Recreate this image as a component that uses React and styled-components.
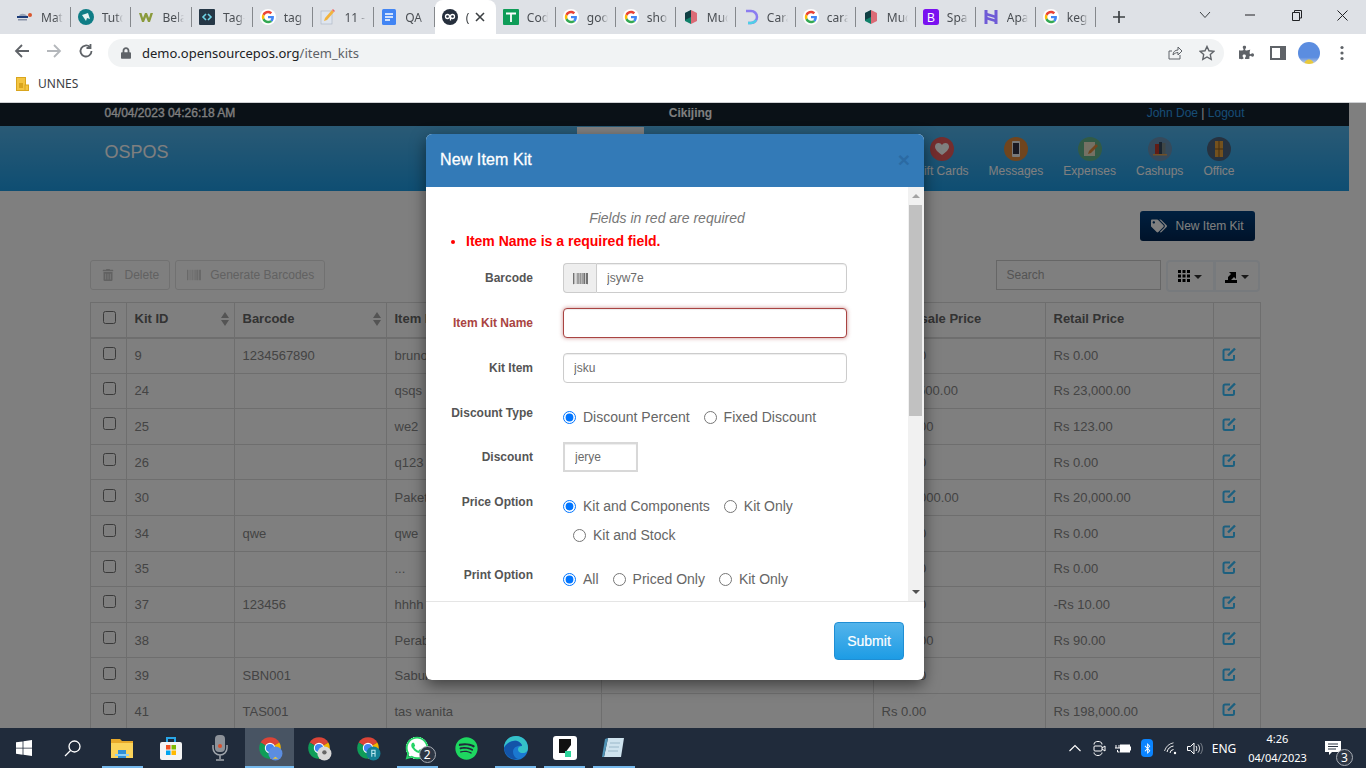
import React from 'react';
import styled, { createGlobalStyle } from 'styled-components';
import { FaTrashAlt, FaBarcode, FaTags, FaWhatsapp, FaSpotify, FaBluetoothB, FaPuzzlePiece, FaLock } from 'react-icons/fa';

const GlobalStyle = createGlobalStyle`
  html, body { margin: 0; padding: 0; overflow: hidden; }
  * { box-sizing: border-box; }
  body { font-family: "Liberation Sans", Arial, sans-serif; }
`;

const Screen = styled.div`
  width: 1366px;
  height: 768px;
  display: flex;
  flex-direction: column;
  overflow: hidden;
  background: #fff;
`;

/* ---------- browser chrome ---------- */
const TabStrip = styled.div`
  height: 34px;
  flex: none;
  background: #dee1e6;
  display: flex;
  padding-left: 10px;
`;

const Tab = styled.div`
  width: ${(p) => p.$w}px;
  height: 34px;
  flex: none;
  display: flex;
  align-items: center;
  font-family: "Noto Sans", sans-serif;
  font-size: 12px;
  color: ${(p) => (p.$active ? '#3c4043' : '#4a4e53')};
  background: ${(p) => (p.$active ? '#fff' : 'transparent')};
  border-radius: ${(p) => (p.$active ? '8px 8px 0 0' : '0')};
`;

const TabInner = styled.div`
  width: 100%;
  height: 20px;
  padding-left: 7px;
  display: flex;
  align-items: center;
  gap: 8px;
  border-right: 1px solid ${(p) => (p.$plain ? 'transparent' : '#85888c')};
`;

const TabText = styled.span`
  flex: 1;
  min-width: 0;
  overflow: hidden;
  white-space: nowrap;
  margin-right: ${(p) => (p.$active ? '0' : '7px')};
  -webkit-mask-image: linear-gradient(to right, #000 65%, transparent 100%);
  mask-image: linear-gradient(to right, #000 65%, transparent 100%);
`;

const TabClose = styled.svg`
  width: 10px;
  height: 10px;
  flex: none;
  margin: 0 10px 0 -6px;
`;

const NewTab = styled.svg`
  width: 14px;
  height: 14px;
  margin: 10px 0 0 16px;
  flex: none;
`;

const WindowControls = styled.div`
  margin-left: auto;
  display: flex;
  height: 30px;
`;

const WindowButton = styled.div`
  width: 46.5px;
  height: 30px;
  display: flex;
  align-items: center;
  justify-content: center;
  padding-left: ${(p) => (p.$nudge ? `${p.$nudge}px` : '0')};
`;

const Toolbar = styled.div`
  height: 33px;
  flex: none;
  background: #fff;
  display: flex;
  align-items: center;
  padding-left: 14px;
`;

const NavArrow = styled.svg`
  width: 16px;
  height: 16px;
  flex: none;
  margin-right: 16px;
`;

const Omnibox = styled.div`
  width: 1116px;
  height: 28px;
  margin: 4px 0 0 -2px;
  border-radius: 14px;
  background: #f1f3f4;
  display: flex;
  align-items: center;
  padding: 0 9px 0 13px;
  font-family: "Noto Sans", sans-serif;
  font-size: 13px;
  color: #202124;
`;

const UrlPath = styled.span`
  color: #5f6368;
`;

const LockIcon = styled(FaLock)`
  width: 10px;
  height: 12px;
  color: #5f6368;
  margin-right: 11px;
`;

const OmniActions = styled.div`
  margin-left: auto;
  display: flex;
  align-items: center;
  gap: 16px;
`;

const ToolActions = styled.div`
  display: flex;
  align-items: center;
  margin: 4px 0 0 15px;
  gap: 16px;
`;

const Avatar = styled.div`
  width: 22px;
  height: 22px;
  margin: 0 4px 0 -4px;
  border-radius: 50%;
  background: radial-gradient(circle at 50% 100%, #e8c93c 0 4px, transparent 5px), linear-gradient(#5b8de0 70%, #cfd6e0 100%);
`;

const BookmarkBar = styled.div`
  height: 36px;
  flex: none;
  display: flex;
  align-items: center;
  gap: 9px;
  padding: 0 0 2px 16px;
  background: #fff;
  border-bottom: 1px solid #cfd1d4;
  font-family: "Noto Sans", sans-serif;
  font-size: 12px;
  color: #3c4043;
`;

/* ---------- page behind the dialog ---------- */
const Page = styled.div`
  flex: 1;
  min-height: 0;
  position: relative;
  overflow: hidden;
  background: #fff;
`;

const PageInner = styled.div`
  width: 1349px;
`;

const Container = styled.div`
  width: 1170px;
  margin: 0 auto;
  display: flex;
`;

const TopBar = styled.div`
  height: 23px;
  background: #14222f;
  font-size: 12px;
  line-height: 20px;
  color: #fff;
`;

const DateCell = styled.div`
  width: 400px;
  padding-left: 15px;
  -webkit-text-stroke: 0.3px #fff;
`;

const BranchCell = styled.div`
  width: 402px;
  text-align: center;
  font-weight: bold;
`;

const UserCell = styled.div`
  flex: 1;
  padding-right: 15px;
  text-align: right;
`;

const UserLink = styled.span`
  color: #2e9be8;
`;

const NavBar = styled.div`
  height: 65px;
  background: linear-gradient(#54b4eb, #1d9ce5);
`;

const Brand = styled.div`
  font-size: 18px;
  line-height: 20px;
  color: #fff;
  padding: 16px 0 0 15px;
`;

const NavList = styled.div`
  margin-left: auto;
  padding-right: 15px;
  display: flex;
`;

const NavItem = styled.div`
  margin-top: 1px;
  margin-right: ${(p) => (p.$after ? `${p.$after}px` : '0')};
  min-width: ${(p) => (p.$active ? '67px' : '0')};
  padding: 10px 10px 0;
  display: flex;
  flex-direction: column;
  align-items: center;
  gap: 3px;
  font-size: 12px;
  line-height: 14px;
  white-space: nowrap;
  color: ${(p) => (p.$active ? '#333' : '#fff')};
  background: ${(p) => (p.$active ? '#fff' : 'transparent')};
`;

const NavIcon = styled.svg`
  width: 24px;
  height: 24px;
`;

const Content = styled.div`
  width: 1170px;
  margin: 0 auto;
  padding-top: 20px;
  font-size: 13px;
  color: #888;
`;

const TitleRow = styled.div`
  display: flex;
  justify-content: flex-end;
  padding-right: 5px;
`;

const PrimaryButton = styled.div`
  width: 115px;
  height: 30px;
  border-radius: 3px;
  background: linear-gradient(#00407f, #002654);
  color: #fff;
  font-size: 12px;
  display: flex;
  align-items: center;
  gap: 9px;
  padding-left: 11px;
`;

const ButtonRow = styled.div`
  display: flex;
  align-items: flex-start;
  margin-top: 19px;
  height: 42px;
`;

const GhostButton = styled.div`
  height: 30px;
  display: flex;
  align-items: center;
  gap: ${(p) => p.$gap}px;
  padding: 0 10px 0 11px;
  margin-right: 5px;
  border: 1px solid #e3e3e3;
  border-radius: 3px;
  font-size: 12px;
  color: #c4c4c4;
`;

const SearchBox = styled.div`
  width: 165px;
  height: 30px;
  margin-left: auto;
  border: 1px solid #ccc;
  font-size: 12px;
  line-height: 28px;
  padding-left: 10px;
  color: #a9a9a9;
`;

const ColumnGroup = styled.div`
  display: flex;
  margin-left: 5px;
  border: 2px solid #eef4fa;
  border-radius: 4px;
  height: 32px;
`;

const ColumnButton = styled.div`
  width: 45px;
  display: flex;
  align-items: center;
  justify-content: center;
  gap: 4px;
  border-left: ${(p) => (p.$split ? '3px solid #eef4fa' : 'none')};
`;

const Caret = styled.span`
  width: 0;
  height: 0;
  border-left: 4px solid transparent;
  border-right: 4px solid transparent;
  border-top: 4px solid #333;
  margin-top: 2px;
`;

const DataTable = styled.table`
  width: 1170px;
  border-collapse: collapse;
  table-layout: fixed;
`;

const HeadCell = styled.th`
  height: 35px;
  padding: 0 8px 2px;
  border: 1px solid #ddd;
  border-bottom: 2px solid #ddd;
  text-align: left;
  font-size: 13px;
  color: #666;
`;

const HeadInner = styled.div`
  display: flex;
  align-items: center;
  justify-content: space-between;
  margin-right: -3px;
`;

const BodyRow = styled.tr`
  height: 35.6px;
`;

const BodyCell = styled.td`
  padding: 0 8px;
  border: 1px solid #ddd;
  overflow: hidden;
  white-space: nowrap;
`;

const CheckCell = styled.td`
  padding: 0 0 5px 12px;
  border: 1px solid #ddd;
`;

const CheckHead = styled(HeadCell)`
  padding: 0 0 5px 12px;
`;

const RowCheck = styled.input`
  display: block;
  width: 13px;
  height: 13px;
  margin: 0;
`;

const EditCell = styled(BodyCell)`
  padding: 0 0 4px 8px;
  line-height: 0;
`;

const EditIcon = styled.svg`
  width: 15px;
  height: 14px;
`;

/* ---------- dialog ---------- */
const Backdrop = styled.div`
  position: absolute;
  inset: 0;
  background: rgba(0, 0, 0, 0.5);
`;

const Modal = styled.div`
  position: absolute;
  top: 31px;
  left: 426px;
  width: 498px;
  height: 546px;
  background: #fff;
  border-radius: 6px;
  box-shadow: 0 5px 15px rgba(0, 0, 0, 0.5);
  overflow: hidden;
  display: flex;
  flex-direction: column;
`;

const ModalHeader = styled.div`
  height: 53px;
  flex: none;
  background: #337ab7;
  color: #fff;
  display: flex;
  align-items: center;
  justify-content: space-between;
  padding: 0 14px 2px;
  font-size: 16px;
  letter-spacing: 0.1px;
  -webkit-text-stroke: 0.3px #fff;
`;

const CloseMark = styled.span`
  font-size: 21px;
  font-weight: bold;
  color: #2b6aa3;
  -webkit-text-stroke: 0;
  line-height: 1;
`;

const ModalBody = styled.div`
  height: 414px;
  flex: none;
  display: flex;
  overflow: hidden;
`;

const FormBody = styled.div`
  flex: 1;
  min-width: 0;
  padding-top: 21px;
  font-size: 14px;
  line-height: 20px;
  color: #666;
`;

const ScrollRail = styled.div`
  width: 16px;
  flex: none;
  background: #f1f1f1;
  display: flex;
  flex-direction: column;
`;

const ScrollArrow = styled.div`
  height: 18px;
  flex: none;
  display: flex;
  align-items: center;
  justify-content: center;
  &::before {
    content: '';
    border-left: 4px solid transparent;
    border-right: 4px solid transparent;
    border-${(p) => (p.$down ? 'top' : 'bottom')}: 4px solid ${(p) => (p.$down ? '#505050' : '#a3a3a3')};
  }
`;

const ScrollTrack = styled.div`
  flex: 1;
  padding: 0 2px 0 1px;
`;

const ScrollThumb = styled.div`
  height: 211px;
  background: #c1c1c1;
`;

const RequiredNote = styled.div`
  text-align: center;
  font-style: italic;
  color: #777;
`;

const ErrorList = styled.ul`
  margin: 3px 0 12px;
  padding-left: 40px;
  color: #f00;
  font-size: 14px;
  font-weight: bold;
`;

const FormRow = styled.div`
  display: grid;
  grid-template-columns: 107px 284px;
  column-gap: 30px;
  margin-bottom: 15px;
  align-items: ${(p) => (p.$top ? 'start' : 'center')};
`;

const FieldLabel = styled.div`
  text-align: right;
  font-size: 12px;
  font-weight: bold;
  color: ${(p) => (p.$error ? '#a94442' : '#555')};
  padding-top: ${(p) => (p.$top ? '5px' : '0')};
`;

const InputGroup = styled.div`
  display: flex;
  height: 30px;
`;

const Addon = styled.div`
  width: 33px;
  flex: none;
  display: flex;
  align-items: center;
  justify-content: center;
  background: #eee;
  border: 1px solid #ccc;
  border-right: 0;
  border-radius: 4px 0 0 4px;
  color: #444;
  font-size: 15px;
`;

const TextField = styled.input`
  display: block;
  width: ${(p) => p.$w || '100%'};
  height: 30px;
  padding: 0 10px;
  font: 12px "Liberation Sans", Arial, sans-serif;
  color: #6b6b6b;
  background: #fff;
  outline: none;
  border: ${(p) => (p.$thick ? '2px' : '1px')} solid ${(p) => (p.$error ? '#a94442' : p.$thick ? '#d8d8d8' : '#ccc')};
  border-radius: ${(p) => (p.$square ? '0' : p.$joined ? '0 4px 4px 0' : '4px')};
  box-shadow: ${(p) => (p.$error ? 'inset 0 1px 1px rgba(0,0,0,.075), 0 0 4px rgba(169,68,66,.6)' : 'inset 0 1px 1px rgba(0,0,0,.075)')};
`;

const RadioGroup = styled.div`
  display: flex;
  flex-wrap: wrap;
  column-gap: 14px;
  row-gap: 9px;
  padding-top: 9px;
`;

const RadioLabel = styled.label`
  display: inline-flex;
  align-items: center;
  gap: 7px;
  white-space: nowrap;
  margin-left: ${(p) => (p.$wrapped ? '10px' : '0')};
`;

const Radio = styled.input`
  width: 13px;
  height: 13px;
  margin: 1px 0 0;
`;

const ModalFooter = styled.div`
  flex: 1;
  border-top: 1px solid #e5e5e5;
  display: flex;
  justify-content: flex-end;
  align-items: flex-start;
  padding: 20px 20px 0 0;
`;

const SubmitButton = styled.button`
  width: 70px;
  height: 38px;
  border: 1px solid #1f8ed4;
  border-radius: 4px;
  background: linear-gradient(#54b4eb, #1d9ce5);
  color: #fff;
  font: 14px "Liberation Sans", Arial, sans-serif;
  -webkit-text-stroke: 0.2px #fff;
  padding: 0;
`;

/* ---------- windows taskbar ---------- */
const Taskbar = styled.div`
  height: 40px;
  flex: none;
  background: #202b3b;
  display: flex;
  color: #fff;
`;

const StartButton = styled.div`
  width: 48px;
  display: flex;
  align-items: center;
  justify-content: center;
  flex: none;
`;

const TaskApps = styled.div`
  display: flex;
  margin-left: 1.5px;
`;

const TaskApp = styled.div`
  position: relative;
  width: 49.2px;
  display: flex;
  align-items: center;
  justify-content: center;
  background: ${(p) => (p.$active ? '#485463' : 'transparent')};
  &::after {
    content: '';
    display: ${(p) => (p.$open ? 'block' : 'none')};
    position: absolute;
    left: ${(p) => (p.$active ? '0' : '4px')};
    right: ${(p) => (p.$active ? '0' : '4px')};
    bottom: 0;
    height: 2px;
    background: #76b9ed;
  }
`;

const AppBadge = styled.span`
  position: absolute;
  left: 26px;
  top: 18px;
  width: 17px;
  height: 17px;
  border-radius: 50%;
  background: #2d3644;
  border: 1px solid #a8adb5;
  font: 12px/15px "Noto Sans", sans-serif;
  text-align: center;
  color: #fff;
`;

const Tray = styled.div`
  margin-left: auto;
  display: flex;
  align-items: center;
  font-family: "Noto Sans", sans-serif;
`;

const TrayIcon = styled.div`
  width: 24px;
  display: flex;
  justify-content: center;
  align-items: center;
`;

const BluetoothChip = styled.div`
  width: 12px;
  height: 18px;
  border-radius: 4px;
  background: #0a84ff;
  display: flex;
  align-items: center;
  justify-content: center;
  font-size: 11px;
  color: #fff;
`;

const TrayLang = styled.div`
  width: 34px;
  text-align: center;
  font-size: 12px;
`;

const Clock = styled.div`
  width: 73px;
  text-align: center;
  font-size: 11px;
  line-height: 19px;
`;

const Notify = styled.div`
  position: relative;
  width: 38px;
  margin-right: 14px;
  height: 40px;
  display: flex;
  align-items: center;
  justify-content: center;
`;

const NotifyBadge = styled.span`
  position: absolute;
  left: 22px;
  top: 21px;
  width: 17px;
  height: 17px;
  border-radius: 50%;
  background: #2d3644;
  border: 1px solid #a8adb5;
  font-size: 12px;
  line-height: 15px;
  text-align: center;
`;

/* ---------- icons ---------- */
function GoogleG({ size = 16 }) {
  return (
    <svg width={size} height={size} viewBox="-7 -7 62 62" style={{ flex: 'none' }}>
      <circle cx="24" cy="24" r="31" fill="#fff" />
      <path fill="#EA4335" d="M24 9.5c3.54 0 6.71 1.22 9.21 3.6l6.85-6.85C35.9 2.38 30.47 0 24 0 14.62 0 6.51 5.38 2.56 13.22l7.98 6.19C12.43 13.72 17.74 9.5 24 9.5z" />
      <path fill="#4285F4" d="M46.98 24.55c0-1.57-.15-3.09-.38-4.55H24v9.02h12.94c-.58 2.96-2.26 5.48-4.78 7.18l7.73 6c4.51-4.18 7.09-10.36 7.09-17.65z" />
      <path fill="#FBBC05" d="M10.53 28.59c-.48-1.45-.76-2.99-.76-4.59s.27-3.14.76-4.59l-7.98-6.19C.92 16.46 0 20.12 0 24c0 3.88.92 7.54 2.56 10.78l7.97-6.19z" />
      <path fill="#34A853" d="M24 48c6.48 0 11.93-2.13 15.89-5.81l-7.73-6c-2.15 1.45-4.92 2.3-8.16 2.3-6.26 0-11.57-4.22-13.47-9.91l-7.98 6.19C6.51 42.62 14.62 48 24 48z" />
    </svg>
  );
}

function Favicon({ kind }) {
  const box = { width: 16, height: 16, viewBox: '0 0 16 16', style: { flex: 'none' } };
  switch (kind) {
    case 'g':
      return <GoogleG />;
    case 'mat':
      return (
        <svg {...box}>
          <rect x="0" y="7" width="11" height="2" fill="#1d3d7a" />
          <rect x="1" y="10" width="9" height="1.5" fill="#8a94a8" />
          <path d="M2 7c1-3 6-3 8 0z" fill="#9aa5b8" />
          <circle cx="13" cy="6" r="2" fill="#d9562e" />
        </svg>
      );
    case 'tut':
      return (
        <svg {...box}>
          <circle cx="8" cy="8" r="8" fill="#0f7d86" />
          <path d="M4 6l6-2 2 6-3-1-1 3-2-3z" fill="#e6f3f3" />
        </svg>
      );
    case 'bel':
      return (
        <svg {...box}>
          <path d="M1 4h2.500l1.500 5 2-5h2l2 5 1.500-5H15l-3 9h-2L8 8l-2 5H4z" fill="#8a9a3c" />
        </svg>
      );
    case 'tag':
      return (
        <svg {...box}>
          <rect width="16" height="16" rx="1" fill="#253746" />
          <path d="M7 5L4 8l3 3M9 5l3 3-3 3" fill="none" stroke="#6fd3e6" strokeWidth="1.600" />
        </svg>
      );
    case 'note':
      return (
        <svg {...box}>
          <rect x="1" y="2" width="11" height="13" fill="#dfe5ee" stroke="#a8b2c2" strokeWidth=".6" />
          <path d="M4 12l1-3 7-8 2 2-7 8z" fill="#f2b33d" />
          <path d="M12 1l2 2 1-1-2-2z" fill="#e66" />
        </svg>
      );
    case 'docs':
      return (
        <svg {...box}>
          <rect x="1" y="0" width="14" height="16" rx="1.500" fill="#4285f4" />
          <path d="M4 5h8M4 8h8M4 11h5" stroke="#fff" strokeWidth="1.500" />
        </svg>
      );
    case 'op':
      return (
        <svg {...box}>
          <circle cx="8" cy="8" r="8" fill="#262f3d" />
          <circle cx="5.500" cy="7.500" r="2" fill="none" stroke="#fff" strokeWidth="1.300" />
          <circle cx="10.500" cy="7.500" r="2" fill="none" stroke="#fff" strokeWidth="1.300" />
          <path d="M8.500 8v3.500" stroke="#fff" strokeWidth="1.300" />
        </svg>
      );
    case 'cod':
      return (
        <svg {...box}>
          <rect width="16" height="16" rx="1" fill="#0f9d58" />
          <path d="M3 4.500h10M8 4.500V13" stroke="#fff" strokeWidth="1.800" />
        </svg>
      );
    case 'mu':
      return (
        <svg {...box}>
          <path d="M8 1L2 4v8l6 3z" fill="#11806a" />
          <path d="M8 1l6 3v8l-6 3z" fill="#dc6b76" />
          <path d="M2 4l6-3v7l-6 3z" fill="#123" opacity=".7" />
        </svg>
      );
    case 'car':
      return (
        <svg {...box}>
          <path d="M3 2h5a6 6 0 0 1 0 12H5" fill="none" stroke="#8b7cf0" strokeWidth="2.500" />
          <path d="M5 14h3a6 6 0 0 0 5-3" fill="none" stroke="#4fd0e6" strokeWidth="2.500" />
        </svg>
      );
    case 'boot':
      return (
        <svg {...box}>
          <rect width="16" height="16" rx="2.500" fill="#7a11f0" />
          <text x="8" y="12.500" fontSize="12" fontFamily="Liberation Sans" textAnchor="middle" fill="#fff">B</text>
        </svg>
      );
    case 'apa':
      return (
        <svg {...box}>
          <path d="M3 1v14M13 1v14" stroke="#6f5bd6" strokeWidth="3" />
          <path d="M3 5l10 3M3 9l10 3" stroke="#6f5bd6" strokeWidth="2.500" />
        </svg>
      );
    default:
      return null;
  }
}

function Folder() {
  return (
    <svg width="13" height="14" viewBox="0 0 13 14">
      <rect x="0.500" y="0.500" width="9" height="13" fill="#f4c542" stroke="#d9a51e" />
      <rect x="9" y="8" width="3.500" height="5.500" fill="#f4c542" stroke="#d9a51e" />
      <path d="M3 6h4v5H3z" fill="#d9a51e" />
    </svg>
  );
}

function ChromeLogo({ badge }) {
  return (
    <svg width="26" height="26" viewBox="0 0 24 24">
      <path d="M12 12L3.340 7A10 10 0 0 1 20.660 7z" fill="#db4437" />
      <path d="M12 12L3.340 7A10 10 0 0 0 12 22z" fill="#0f9d58" />
      <path d="M12 12L20.660 7A10 10 0 0 1 12 22z" fill="#f4b400" />
      <circle cx="12" cy="12" r="4.800" fill="#fff" />
      <circle cx="12" cy="12" r="3.800" fill="#4285f4" />
      {badge && <circle cx="17" cy="17" r="6.500" fill={badge} />}
      {badge === '#5b8de0' && <path d="M14.500 22l2.500-2 2.500 2z" fill="#e8c93c" />}
      {badge === '#d7d7d7' && <circle cx="17" cy="16" r="2" fill="#666" />}
      {badge === '#137f94' && <path d="M15.500 20v-6h3v6M15.500 17h3" stroke="#bdeaf2" fill="none" />}
    </svg>
  );
}

const ICON_COLOR = '#5f6368';

const tabs = [
  ['mat', 'Mat'], ['tut', 'Tutc'], ['bel', 'Bela'], ['tag', 'Tag-'], ['g', 'tag'], ['note', '11 -'], ['docs', 'QA'],
];
const tabsAfter = [
  ['cod', 'Cod'], ['g', 'goo'], ['g', 'sho'], ['mu', 'Muc'], ['car', 'Cara'], ['g', 'cara'], ['mu', 'Muc'], ['boot', 'Spa'], ['apa', 'Apa'], ['g', 'keg'],
];

const navItems = [
  { label: 'Gift Cards', color: '#e85a5c', icon: <path d="M12 18c-5-3.500-7-6-7-8.500C5 7 7 6 8.500 6c1.500 0 2.800.8 3.500 2 .7-1.200 2-2 3.500-2C17 6 19 7 19 9.500 19 12 17 14.500 12 18z" fill="#fff" /> },
  { label: 'Messages', color: '#e08a3c', icon: <g><rect x="8" y="4" width="8" height="16" rx="1" fill="#f2f2f2" /><rect x="9" y="6" width="6" height="11" fill="#334" /></g> },
  { label: 'Expenses', color: '#62b58c', icon: <g><rect x="6" y="5" width="11" height="14" fill="#e9e2c8" /><path d="M10 17l1-3 7-7 2 2-7 7z" fill="#e08a3c" /></g> },
  { label: 'Cashups', color: '#6a94b8', icon: <g><rect x="7" y="7" width="4" height="10" fill="#c0392b" /><rect x="11" y="5" width="3" height="12" fill="#34495e" /><rect x="14" y="6" width="3.500" height="11" fill="#7f8c8d" /><rect x="5" y="17" width="14" height="1.500" fill="#e0a050" /></g> },
  { label: 'Office', color: '#4d6480', icon: <g><rect x="8" y="4" width="8" height="16" fill="#e6a23c" /><path d="M12 4v16M8 12h8" stroke="#8a5a1c" strokeWidth="1" /></g> },
];

const rows = [
  ['9', '1234567890', 'bruno', 'Rs 0.00', 'Rs 0.00'],
  ['24', '', 'qsqs', 'Rs 11,500.00', 'Rs 23,000.00'],
  ['25', '', 'we2', 'Rs 10.00', 'Rs 123.00'],
  ['26', '', 'q123', 'Rs 0.00', 'Rs 0.00'],
  ['30', '', 'Paket', 'Rs 10,000.00', 'Rs 20,000.00'],
  ['34', 'qwe', 'qwe', 'Rs 0.00', 'Rs 0.00'],
  ['35', '', '...', 'Rs 0.00', 'Rs 0.00'],
  ['37', '123456', 'hhhh', 'Rs 0.00', '-Rs 10.00'],
  ['38', '', 'Perabot', 'Rs 50.00', 'Rs 90.00'],
  ['39', 'SBN001', 'Sabun', 'Rs 0.00', 'Rs 0.00'],
  ['41', 'TAS001', 'tas wanita', 'Rs 0.00', 'Rs 198,000.00'],
];

function SortMark() {
  return (
    <svg width="8" height="14" viewBox="0 0 8 14">
      <path d="M4 0l4 6H0zM4 14L0 8h8z" fill="#a9a9a9" />
    </svg>
  );
}

function BrowserChrome() {
  return (
    <>
      <TabStrip>
        {tabs.map(([kind, title], i) => (
          <Tab key={i} $w={60.7}>
            <TabInner>
              <Favicon kind={kind} />
              <TabText>{title}</TabText>
            </TabInner>
          </Tab>
        ))}
        <Tab $w={61} $active>
          <TabInner $plain>
            <Favicon kind="op" />
            <TabText $active>(</TabText>
            <TabClose viewBox="0 0 10 10">
              <path d="M1 1l8 8M9 1L1 9" stroke="#3c4043" strokeWidth="1.600" />
            </TabClose>
          </TabInner>
        </Tab>
        {tabsAfter.map(([kind, title], i) => (
          <Tab key={i} $w={60}>
            <TabInner>
              <Favicon kind={kind} />
              <TabText>{title}</TabText>
            </TabInner>
          </Tab>
        ))}
        <NewTab viewBox="0 0 14 14">
          <path d="M7 1v12M1 7h12" stroke="#3c4043" strokeWidth="1.700" />
        </NewTab>
        <WindowControls>
          <WindowButton $nudge={4}>
            <svg width="12" height="8" viewBox="0 0 12 8"><path d="M1 1l5 5.500L11 1" fill="none" stroke="#3c4043" /></svg>
          </WindowButton>
          <WindowButton>
            <svg width="10" height="2" viewBox="0 0 10 2"><path d="M0 1h10" stroke="#202124" /></svg>
          </WindowButton>
          <WindowButton $nudge={2}>
            <svg width="10" height="11" viewBox="0 0 10 11"><path d="M.5 2.500h7v8h-7zM2.500 2.500v-2h7v7.500h-2" fill="none" stroke="#202124" /></svg>
          </WindowButton>
          <WindowButton>
            <svg width="11" height="11" viewBox="0 0 11 11"><path d="M.5.500l10 10M10.500.500l-10 10" stroke="#202124" /></svg>
          </WindowButton>
        </WindowControls>
      </TabStrip>
      <Toolbar>
        <NavArrow viewBox="0 0 16 16"><path d="M15 8H2M8 2L2 8l6 6" fill="none" stroke={ICON_COLOR} strokeWidth="1.800" /></NavArrow>
        <NavArrow viewBox="0 0 16 16"><path d="M1 8h13M8 2l6 6-6 6" fill="none" stroke="#b4b7bb" strokeWidth="1.800" /></NavArrow>
        <NavArrow viewBox="0 0 16 16"><path d="M13.500 8a5.500 5.500 0 1 1-1.600-3.900M12.500 1v4h-4" fill="none" stroke={ICON_COLOR} strokeWidth="1.800" /></NavArrow>
        <Omnibox>
          <LockIcon />
          demo.opensourcepos.org<UrlPath>/item_kits</UrlPath>
          <OmniActions>
            <svg width="16" height="16" viewBox="0 0 16 16"><path d="M13 10v4H2V6h3M6 10c0-3 2-5 5-5V2l4 4-4 4V7.500c-2 0-3.500 1-5 2.500z" fill="none" stroke={ICON_COLOR} /></svg>
            <svg width="16" height="16" viewBox="0 0 16 16"><path d="M8 1.500l2 4.300 4.700.6-3.400 3.200.9 4.700L8 12l-4.200 2.300.9-4.700L1.300 6.400 6 5.800z" fill="none" stroke={ICON_COLOR} strokeWidth="1.400" /></svg>
          </OmniActions>
        </Omnibox>
        <ToolActions>
          <FaPuzzlePiece size={15} color={ICON_COLOR} />
          <svg width="16" height="14" viewBox="0 0 16 14"><path d="M1 1h14v12H1z" fill="none" stroke={ICON_COLOR} strokeWidth="2" /><path d="M10 1h5v12h-5z" fill={ICON_COLOR} /></svg>
          <Avatar />
          <svg width="4" height="16" viewBox="0 0 4 16"><circle cx="2" cy="2.500" r="1.600" fill={ICON_COLOR} /><circle cx="2" cy="8" r="1.600" fill={ICON_COLOR} /><circle cx="2" cy="13.500" r="1.600" fill={ICON_COLOR} /></svg>
        </ToolActions>
      </Toolbar>
      <BookmarkBar>
        <Folder />
        UNNES
      </BookmarkBar>
    </>
  );
}

function ItemKitsPage() {
  return (
    <PageInner>
      <TopBar>
        <Container>
          <DateCell>04/04/2023 04:26:18 AM</DateCell>
          <BranchCell>Cikijing</BranchCell>
          <UserCell><UserLink>John Doe</UserLink> | <UserLink>Logout</UserLink></UserCell>
        </Container>
      </TopBar>
      <NavBar>
        <Container>
          <Brand>OSPOS</Brand>
          <NavList>
            <NavItem $active $after={261}>Item Kits</NavItem>
            {navItems.map((item) => (
              <NavItem key={item.label}>
                <NavIcon viewBox="0 0 24 24">
                  <circle cx="12" cy="12" r="12" fill={item.color} />
                  {item.icon}
                </NavIcon>
                {item.label}
              </NavItem>
            ))}
          </NavList>
        </Container>
      </NavBar>
      <Content>
        <TitleRow>
          <PrimaryButton><FaTags size={16} color="#fff" />New Item Kit</PrimaryButton>
        </TitleRow>
        <ButtonRow>
          <GhostButton $gap={11}><FaTrashAlt size={12} color="#c4c4c4" />Delete</GhostButton>
          <GhostButton $gap={9}><FaBarcode size={14} color="#c4c4c4" />Generate Barcodes</GhostButton>
          <SearchBox>Search</SearchBox>
          <ColumnGroup>
            <ColumnButton>
              <svg width="12" height="12" viewBox="0 0 12 12" fill="#000">
                <path d="M0 0h3v3H0zM4.500 0h3v3h-3zM9 0h3v3H9zM0 4.500h3v3H0zM4.500 4.500h3v3h-3zM9 4.500h3v3H9zM0 9h3v3H0zM4.500 9h3v3h-3zM9 9h3v3H9z" />
              </svg>
              <Caret />
            </ColumnButton>
            <ColumnButton $split>
              <svg width="12" height="13" viewBox="0 0 12 13" fill="#000">
                <path d="M0 10h12v3H0zM3 10V7l3-3-2-2h7v7L9 7 6 10z" />
              </svg>
              <Caret />
            </ColumnButton>
          </ColumnGroup>
        </ButtonRow>
        <DataTable>
          <colgroup>
            <col style={{ width: 36 }} /><col style={{ width: 108 }} /><col style={{ width: 152 }} /><col style={{ width: 215 }} />
            <col style={{ width: 272 }} /><col style={{ width: 172 }} /><col style={{ width: 168 }} /><col style={{ width: 47 }} />
          </colgroup>
          <thead>
            <tr>
              <CheckHead><RowCheck type="checkbox" /></CheckHead>
              <HeadCell><HeadInner>Kit ID<SortMark /></HeadInner></HeadCell>
              <HeadCell><HeadInner>Barcode<SortMark /></HeadInner></HeadCell>
              <HeadCell>Item Kit Name</HeadCell>
              <HeadCell>Item Kit Description</HeadCell>
              <HeadCell>Wholesale Price</HeadCell>
              <HeadCell>Retail Price</HeadCell>
              <HeadCell />
            </tr>
          </thead>
          <tbody>
            {rows.map((row) => (
              <BodyRow key={row[0]}>
                <CheckCell><RowCheck type="checkbox" /></CheckCell>
                <BodyCell>{row[0]}</BodyCell>
                <BodyCell>{row[1]}</BodyCell>
                <BodyCell>{row[2]}</BodyCell>
                <BodyCell />
                <BodyCell>{row[3]}</BodyCell>
                <BodyCell>{row[4]}</BodyCell>
                <EditCell>
                  <EditIcon viewBox="0 0 15 14" fill="none" stroke="#3ac0ff">
                    <path d="M8 2.500H3A1.500 1.500 0 0 0 1.500 4v7.500A1.500 1.500 0 0 0 3 13h7.500a1.500 1.500 0 0 0 1.500-1.500V8" strokeWidth="2" />
                    <path d="M6 8.500L13 1.500" strokeWidth="2.400" />
                  </EditIcon>
                </EditCell>
              </BodyRow>
            ))}
          </tbody>
        </DataTable>
      </Content>
    </PageInner>
  );
}

function RadioChoice({ name, label, checked, wrapped }) {
  return (
    <RadioLabel $wrapped={wrapped}>
      <Radio type="radio" name={name} defaultChecked={checked} />
      {label}
    </RadioLabel>
  );
}

function NewItemKitDialog() {
  return (
    <Modal>
      <ModalHeader>
        New Item Kit
        <CloseMark>×</CloseMark>
      </ModalHeader>
      <ModalBody>
        <FormBody>
          <RequiredNote>Fields in red are required</RequiredNote>
          <ErrorList><li>Item Name is a required field.</li></ErrorList>
          <FormRow>
            <FieldLabel>Barcode</FieldLabel>
            <InputGroup>
              <Addon><FaBarcode /></Addon>
              <TextField $joined defaultValue="jsyw7e" />
            </InputGroup>
          </FormRow>
          <FormRow>
            <FieldLabel $error>Item Kit Name</FieldLabel>
            <TextField $error />
          </FormRow>
          <FormRow>
            <FieldLabel>Kit Item</FieldLabel>
            <TextField defaultValue="jsku" />
          </FormRow>
          <FormRow $top>
            <FieldLabel $top>Discount Type</FieldLabel>
            <RadioGroup>
              <RadioChoice name="discount" label="Discount Percent" checked />
              <RadioChoice name="discount" label="Fixed Discount" />
            </RadioGroup>
          </FormRow>
          <FormRow>
            <FieldLabel>Discount</FieldLabel>
            <TextField $w="75px" $square $thick defaultValue="jerye" />
          </FormRow>
          <FormRow $top>
            <FieldLabel $top>Price Option</FieldLabel>
            <RadioGroup>
              <RadioChoice name="price" label="Kit and Components" checked />
              <RadioChoice name="price" label="Kit Only" />
              <RadioChoice name="price" label="Kit and Stock" wrapped />
            </RadioGroup>
          </FormRow>
          <FormRow $top>
            <FieldLabel $top>Print Option</FieldLabel>
            <RadioGroup>
              <RadioChoice name="print" label="All" checked />
              <RadioChoice name="print" label="Priced Only" />
              <RadioChoice name="print" label="Kit Only" />
            </RadioGroup>
          </FormRow>
        </FormBody>
        <ScrollRail>
          <ScrollArrow />
          <ScrollTrack><ScrollThumb /></ScrollTrack>
          <ScrollArrow $down />
        </ScrollRail>
      </ModalBody>
      <ModalFooter>
        <SubmitButton type="button">Submit</SubmitButton>
      </ModalFooter>
    </Modal>
  );
}

function WindowsTaskbar() {
  return (
    <Taskbar>
      <StartButton>
        <svg width="16" height="16" viewBox="0 0 16 16" fill="#fff"><path d="M0 2.300l6.600-.9v6.300H0zM7.400 1.300L16 0v7.700H7.400zM0 8.400h6.600v6.300L0 13.800zM7.400 8.400H16V16l-8.600-1.200z" /></svg>
      </StartButton>
      <StartButton>
        <svg width="17" height="17" viewBox="0 0 17 17" fill="none" stroke="#fff" strokeWidth="1.300"><circle cx="10.500" cy="6.500" r="5.500" /><path d="M6.500 10.500L1 16" /></svg>
      </StartButton>
      <TaskApps>
        <TaskApp $open>
          <svg width="24" height="22" viewBox="0 0 24 22">
            <path d="M1 2h9l2 2h11v4H1z" fill="#e8a92a" /><rect x="1" y="6" width="22" height="15" fill="#fbd35a" /><rect x="8" y="13" width="8" height="8" fill="#2e8fd8" /><rect x="5" y="17" width="14" height="2" fill="#8ed0f5" />
          </svg>
        </TaskApp>
        <TaskApp>
          <svg width="24" height="25" viewBox="0 0 24 25">
            <path d="M8 6V2h8v4" fill="none" stroke="#29a7e8" strokeWidth="2" /><rect x="1" y="6" width="22" height="18" rx="2" fill="#f4f4f4" />
            <rect x="7" y="9" width="4.500" height="4.500" fill="#f25022" /><rect x="12.500" y="9" width="4.500" height="4.500" fill="#7fba00" /><rect x="7" y="14.500" width="4.500" height="4.500" fill="#00a4ef" /><rect x="12.500" y="14.500" width="4.500" height="4.500" fill="#ffb900" />
          </svg>
        </TaskApp>
        <TaskApp>
          <svg width="16" height="26" viewBox="0 0 16 26">
            <rect x="3" y="0" width="10" height="17" rx="4" fill="#8d9299" /><circle cx="8" cy="11" r="2" fill="#d9502e" /><path d="M1 10v3a7 7 0 0 0 14 0v-3M8 20v4M4 25h8" fill="none" stroke="#a0a5ac" strokeWidth="1.500" />
          </svg>
        </TaskApp>
        <TaskApp $active $open><ChromeLogo badge="#5b8de0" /></TaskApp>
        <TaskApp><ChromeLogo badge="#d7d7d7" /></TaskApp>
        <TaskApp><ChromeLogo badge="#137f94" /></TaskApp>
        <TaskApp $open>
          <FaWhatsapp size={26} color="#25d366" style={{ background: 'radial-gradient(circle, #fff 60%, transparent 62%)' }} />
          <AppBadge>2</AppBadge>
        </TaskApp>
        <TaskApp><FaSpotify size={23} color="#1ed760" /></TaskApp>
        <TaskApp $open>
          <svg width="24" height="24" viewBox="0 0 24 24">
            <circle cx="12" cy="12" r="12" fill="#1b78d0" />
            <path d="M24 12c0 3-2 5-5 5-4 0-5-2-5-4s2-3 4-3c-1-4-5-6-9-5C4 6 1 9 0 12 0 5 5 0 12 0s12 5 12 12z" fill="#35c1c8" />
            <path d="M18 10c-4-1-9 1-9 6 0 3 2 6 5 7-7 1-13-3-14-11 3-5 8-8 13-7 3 1 5 3 5 5z" fill="#1354a8" />
          </svg>
        </TaskApp>
        <TaskApp $open>
          <svg width="24" height="24" viewBox="0 0 24 24">
            <rect width="24" height="24" rx="3" fill="#fff" /><path d="M6 3h12v6l-6 8H6z" fill="#111" /><rect x="12" y="15" width="6" height="6" fill="#2bd49a" />
          </svg>
        </TaskApp>
        <TaskApp $open>
          <svg width="24" height="24" viewBox="0 0 24 24">
            <path d="M6 2h16l-3 19H2z" fill="#cfe3ee" /><path d="M2 21l4-19-3 1-3 18z" fill="#4f93b5" /><path d="M8 7h10M7 11h10M6 15h10" stroke="#9ab8c9" />
          </svg>
        </TaskApp>
      </TaskApps>
      <Tray>
        <TrayIcon><svg width="12" height="8" viewBox="0 0 12 8"><path d="M.5 7L6 1.500 11.500 7" fill="none" stroke="#fff" strokeWidth="1.100" /></svg></TrayIcon>
        <TrayIcon>
          <svg width="13" height="15" viewBox="0 0 13 15" fill="none" stroke="#fff"><path d="M1 3.500C1 1 3 .5 5 .5s4 .5 4 3M1 11.500c0 2 2 3 4 3s4-1 4-3" /><rect x="1" y="5" width="8" height="5" rx="1" /><path d="M9 7l3-2v5l-3-2" /></svg>
        </TrayIcon>
        <TrayIcon>
          <svg width="16" height="11" viewBox="0 0 16 11"><path d="M1 2v3M4 2v3M0 5h5M2.500 7v2h2" fill="none" stroke="#fff" /><rect x="5" y="1.500" width="10" height="8" fill="#fff" /><rect x="15" y="3.500" width="1" height="4" fill="#fff" /></svg>
        </TrayIcon>
        <TrayIcon><BluetoothChip><FaBluetoothB /></BluetoothChip></TrayIcon>
        <TrayIcon>
          <svg width="14" height="13" viewBox="0 0 14 13" fill="none" stroke="#fff"><path d="M.5 9A12 12 0 0 1 9.500.800" strokeOpacity=".8" /><path d="M3 10a8 8 0 0 1 6.500-6" /><path d="M6 11a4 4 0 0 1 3.500-3.500" /><circle cx="11" cy="11" r="1.200" fill="#fff" stroke="none" /></svg>
        </TrayIcon>
        <TrayIcon>
          <svg width="16" height="13" viewBox="0 0 16 13" fill="none" stroke="#fff"><path d="M.5 4.500h3L7 1v11L3.500 8.500h-3z" /><path d="M9 4c1 1.500 1 3.500 0 5M11 2.500c2 2.500 2 5.500 0 8" /><path d="M13.500 1c2.500 3.500 2.500 7.500 0 11" strokeOpacity=".4" /></svg>
        </TrayIcon>
        <TrayLang>ENG</TrayLang>
        <Clock>4:26<br />04/04/2023</Clock>
        <Notify>
          <svg width="16" height="15" viewBox="0 0 16 15"><path d="M0 0h16v11H7l-3 3v-3H0z" fill="#fff" /><path d="M3 3h10M3 5.500h10M3 8h8" stroke="#2d3644" /></svg>
          <NotifyBadge>3</NotifyBadge>
        </Notify>
      </Tray>
    </Taskbar>
  );
}

export default function App() {
  return (
    <Screen>
      <GlobalStyle />
      <BrowserChrome />
      <Page>
        <ItemKitsPage />
        <Backdrop />
        <NewItemKitDialog />
      </Page>
      <WindowsTaskbar />
    </Screen>
  );
}
